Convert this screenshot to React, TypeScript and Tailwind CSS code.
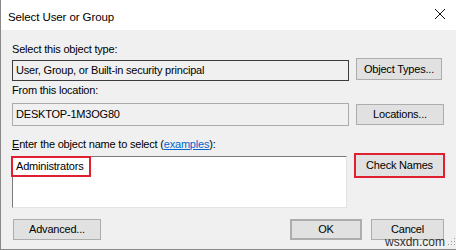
import React from 'react';

const font = { fontFamily: '"Liberation Sans", Arial, sans-serif' };

function WinButton({ children, className = '' }: { children: React.ReactNode; className?: string }) {
  return (
    <div className={`flex items-center justify-center bg-[#e1e1e1] border border-[#adadad] text-[11px] text-black tracking-[-0.2px] ${className}`}>
      {children}
    </div>
  );
}

export default function App() {
  return (
    <div className="relative w-[456px] h-[250px] overflow-hidden bg-[#f0f0f0] border-l border-b border-[#888888]" style={font}>
      {/* Title bar */}
      <div className="h-[30px] bg-white flex items-center justify-between pl-[7px] pr-[10px]">
        <span className="text-[11.5px] text-black tracking-[-0.1px] mt-[5px]">Select User or Group</span>
        <svg width="12" height="12" viewBox="0 0 12 12" className="mt-[-2px]">
          <path d="M1 1 L11 11 M11 1 L1 11" stroke="#111" strokeWidth="1" fill="none" />
        </svg>
      </div>

      <div className="flex flex-col pl-[11px] text-[11px] text-black tracking-[-0.2px]">
        <div className="mt-[12px] h-[14px] leading-[14px]">Select this object type:</div>
        <div className="flex items-start mt-[2px]">
          <div className="mt-[2px] w-[337px] h-[21px] border border-[#3c3c3c] bg-[#f0f0f0] flex items-center pl-[3px]">
            User, Group, or Built-in security principal
          </div>
          <WinButton className="ml-[7px] w-[86px] h-[22px]">Object Types...</WinButton>
        </div>

        <div className="mt-[2px] h-[14px] leading-[14px]">From this location:</div>
        <div className="flex items-start mt-[6px]">
          <div className="w-[337px] h-[23px] border border-[#ababab] bg-[#f0f0f0] flex items-center pl-[3px]">
            DESKTOP-1M3OG80
          </div>
          <WinButton className="ml-[7px] mt-[1px] w-[88px] h-[21px]">Locations...</WinButton>
        </div>

        <div className="mt-[11px] h-[14px] leading-[14px]">
          <span className="underline">E</span>nter the object name to select (
          <span className="text-[#0066cc] underline">examples</span>):
        </div>
        <div className="flex items-start mt-[2px]">
          <div className="relative mt-[3px] w-[335px] h-[52px] bg-white border border-t-[#7a7a7a] border-l-[#7a7a7a] border-r-[#e3e3e3] border-b-[#e3e3e3]">
            <div className="absolute left-[-2px] top-[-1px] w-[80px] h-[21px] border-2 border-[#e0202e] flex items-center pl-[3px]">
              Administrators
            </div>
          </div>
          <div className="ml-[7px] w-[91px] h-[25px] border-2 border-[#e0202e] bg-[#e1e1e1] flex items-center justify-center">
            Check Names
          </div>
        </div>

        <div className="flex items-start mt-[11px]">
          <WinButton className="ml-[1px] w-[88px] h-[21px]">Advanced...</WinButton>
          <WinButton className="ml-[189px] w-[72px] h-[21px] border-2 border-[#0078d7]">OK</WinButton>
          <WinButton className="ml-[9px] w-[73px] h-[21px]">Cancel</WinButton>
        </div>
      </div>

      {/* watermark */}
      <div className="absolute right-[11px] bottom-[1px] text-[12px] leading-[12px] text-[#333333]" style={font}>
        wsxdn.com
      </div>
      {/* resize grip */}
      <svg width="8" height="9" viewBox="0 0 8 9" className="absolute right-0 bottom-[2px]">
        <rect x="6" y="0" width="1" height="1" fill="#999" />
        <rect x="3" y="3" width="1" height="1" fill="#999" />
        <rect x="6" y="3" width="1" height="1" fill="#999" />
        <rect x="0" y="6" width="1" height="1" fill="#999" />
        <rect x="3" y="6" width="1" height="1" fill="#999" />
        <rect x="6" y="6" width="1" height="1" fill="#999" />
      </svg>
    </div>
  );
}
